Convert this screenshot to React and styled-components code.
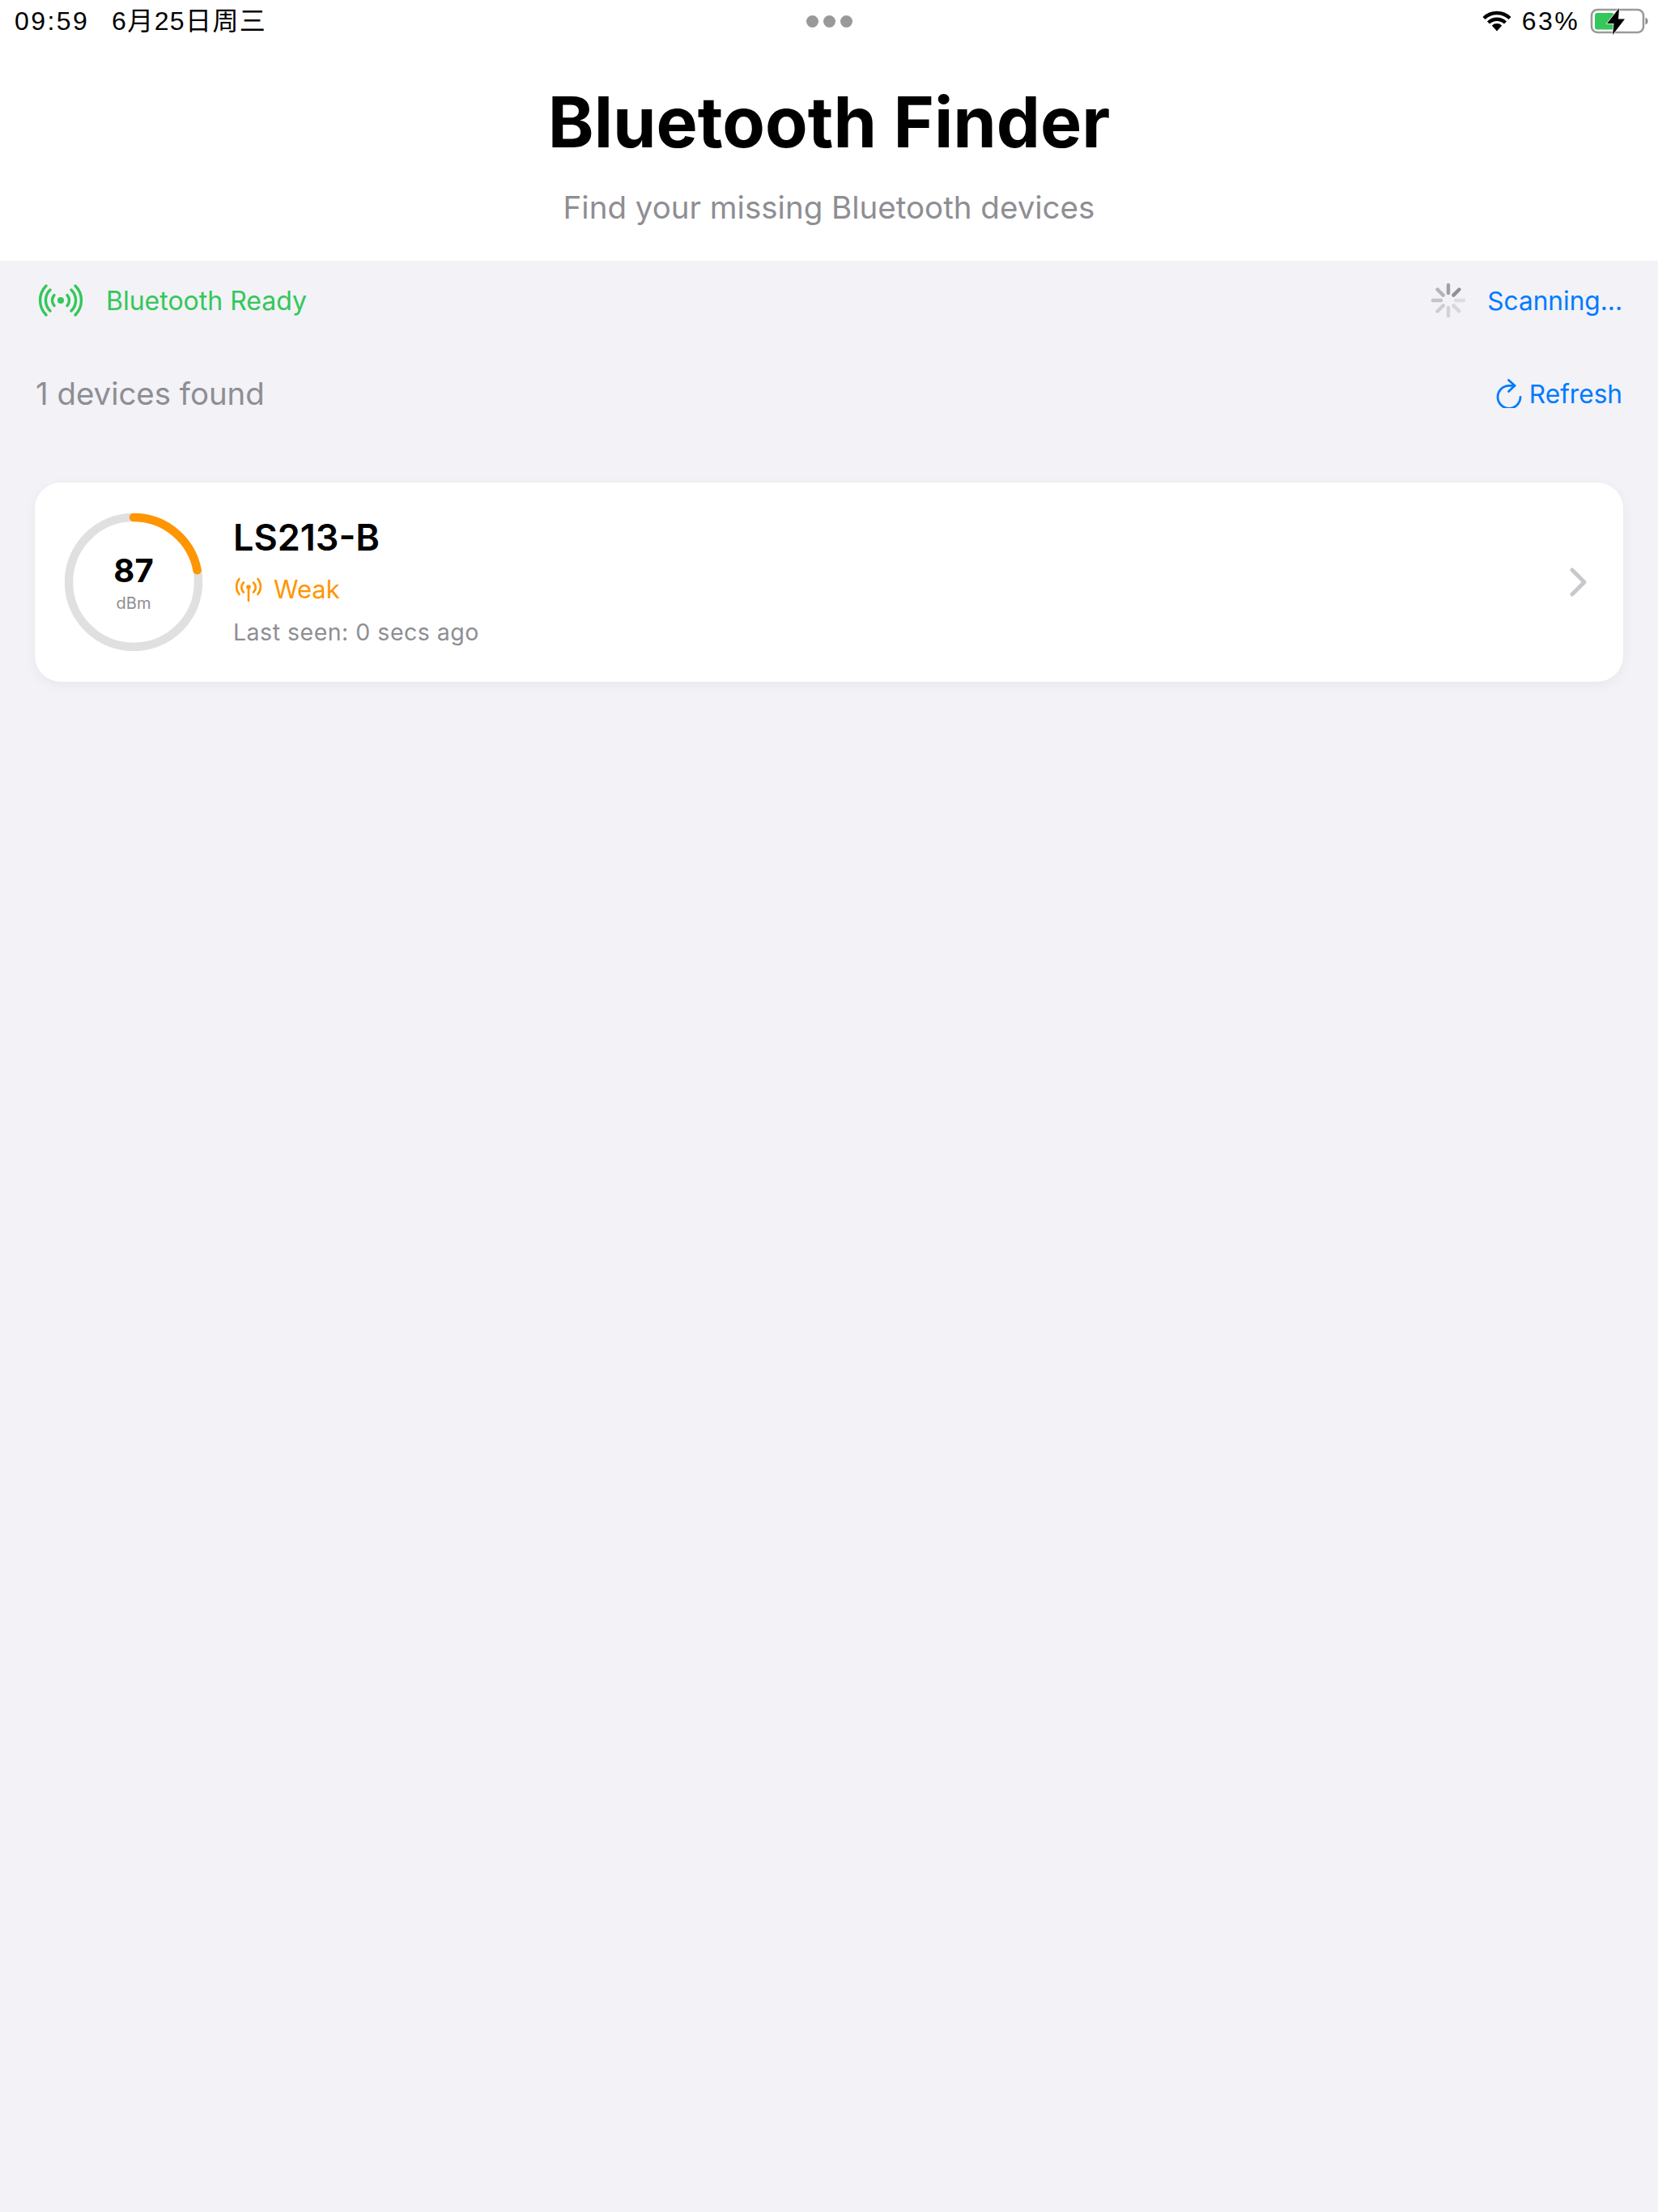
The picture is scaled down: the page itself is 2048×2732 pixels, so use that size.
import React from "react";
import styled, { createGlobalStyle } from "styled-components";

const blue = "#007AFF";
const green = "#34C759";
const orange = "#FF9500";
const gray = "#8E8E93";

const GlobalStyle = createGlobalStyle`
  html, body {
    margin: 0;
    padding: 0;
    background: #f2f2f7;
    font-family: Inter, "Noto Sans", sans-serif;
    -webkit-font-smoothing: antialiased;
  }
`;

export default function App() {
  return (
    <Page>
      <GlobalStyle />
      <Header>
        <StatusBar>
          <StatusLeft>
            <StatusText>09:59</StatusText>
            <StatusText $tight>6月25日周三</StatusText>
          </StatusLeft>
          <MoreDots>
            <i />
            <i />
            <i />
          </MoreDots>
          <StatusRight>
            <WifiIcon />
            <StatusText>63%</StatusText>
            <BatteryIcon />
          </StatusRight>
        </StatusBar>
        <Title>Bluetooth Finder</Title>
        <Subtitle>Find your missing Bluetooth devices</Subtitle>
      </Header>

      <Content>
        <InfoRow>
          <Status $color={green}>
            <BroadcastSvg width="56" height="42" viewBox="0 0 56 42" fill="none" stroke={green} strokeWidth="3.4" strokeLinecap="round">
              <circle cx="28" cy="21" r="4" fill={green} stroke="none" />
              <path d="M20 14.5 A9.7 9.7 0 0 0 20 27.5" />
              <path d="M36 14.5 A9.7 9.7 0 0 1 36 27.5" />
              <path d="M15 8 A18 18 0 0 0 15 34" />
              <path d="M41 8 A18 18 0 0 1 41 34" />
              <path d="M10 3 A25.5 25.5 0 0 0 10 39" />
              <path d="M46 3 A25.5 25.5 0 0 1 46 39" />
            </BroadcastSvg>
            Bluetooth Ready
          </Status>
          <Status $color={blue} $size="31.6px" $gap="26px">
            <Spinner />
            Scanning...
          </Status>
        </InfoRow>

        <CountRow>
          <Count>1 devices found</Count>
          <RefreshButton>
            <RefreshIcon />
            Refresh
          </RefreshButton>
        </CountRow>

        <DeviceCard>
          <Gauge>
            <GaugeRing />
            <GaugeValue>87</GaugeValue>
            <GaugeUnit>dBm</GaugeUnit>
          </Gauge>
          <DeviceInfo>
            <DeviceName>LS213-B</DeviceName>
            <Signal>
              <AntennaIcon />
              Weak
            </Signal>
            <LastSeen>Last seen: 0 secs ago</LastSeen>
          </DeviceInfo>
          <Chevron />
        </DeviceCard>
      </Content>
    </Page>
  );
}

function WifiIcon() {
  return (
    <svg width="36" height="26" viewBox="0 0 36 26">
      <path d="M18 25.5 L11.8 18.5 A9 9 0 0 1 24.2 18.5 Z" fill="#000" />
      <path d="M7.5 15 A15 15 0 0 1 28.5 15" fill="none" stroke="#000" strokeWidth="4.4" />
      <path d="M2 9.5 A23 23 0 0 1 34 9.5" fill="none" stroke="#000" strokeWidth="4.4" />
    </svg>
  );
}

function BatteryIcon() {
  return (
    <svg width="72" height="36" viewBox="0 0 72 36">
      <rect x="2" y="4" width="64" height="28" rx="7" fill="none" stroke="#9a9a9a" strokeWidth="2.6" />
      <rect x="6" y="8" width="24" height="20.5" rx="3" fill={green} />
      <path d="M68.5 13.5 C70.5 14.5 71.5 16 71.5 18 C71.5 20 70.5 21.5 68.5 22.5 Z" fill="#8a8a8a" />
      <path d="M36 2 L21 21 L29.5 21 L28 35 L43 15.5 L35 15.5 Z" fill="#000" stroke="#fff" strokeWidth="1.4" paintOrder="stroke" />
    </svg>
  );
}

const spokes = [0, 45, 90, 135, 180, 225, 270, 315];
const spokeOpacity = [0.62, 0.75, 0.16, 0.2, 0.24, 0.28, 0.34, 0.48];

function Spinner() {
  return (
    <svg width="44" height="44" viewBox="0 0 44 44">
      {spokes.map((deg, i) => (
        <line
          key={deg}
          x1="22"
          y1="3"
          x2="22"
          y2="13"
          stroke="#6f6f74"
          strokeWidth="4.4"
          strokeLinecap="round"
          opacity={spokeOpacity[i]}
          transform={`rotate(${deg} 22 22)`}
        />
      ))}
    </svg>
  );
}

function RefreshIcon() {
  return (
    <svg width="32" height="36" viewBox="0 0 32 36" fill="none" stroke={blue} strokeWidth="2.8" strokeLinecap="round" strokeLinejoin="round">
      <path d="M30 22.3 A14 14 0 1 1 16 8.3 L23 8.3" />
      <path d="M15.5 1.5 L23 8.3 L15.5 15.5" />
    </svg>
  );
}

function GaugeRing() {
  const r = 80;
  const circ = 2 * Math.PI * r;
  return (
    <RingSvg width="170" height="170" viewBox="0 0 170 170" fill="none" strokeWidth="10.5">
      <circle cx="85" cy="85" r={r} stroke="#E0E0E0" />
      <circle
        cx="85"
        cy="85"
        r={r}
        stroke={orange}
        strokeLinecap="round"
        strokeDasharray={`${circ * 0.22} ${circ}`}
        transform="rotate(-90 85 85)"
      />
    </RingSvg>
  );
}

function AntennaIcon() {
  return (
    <svg width="34" height="30" viewBox="0 0 34 30" fill="none" stroke={orange} strokeWidth="2.6" strokeLinecap="round">
      <circle cx="17" cy="12" r="2.8" fill={orange} stroke="none" />
      <path d="M17 13 L17 29" />
      <path d="M11 6.5 A8 8 0 0 0 11 18.5" />
      <path d="M23 6.5 A8 8 0 0 1 23 18.5" />
      <path d="M5.5 2 A15 15 0 0 0 5.5 21" />
      <path d="M28.5 2 A15 15 0 0 1 28.5 21" />
    </svg>
  );
}

function Chevron() {
  return (
    <ChevronSvg width="24" height="38" viewBox="0 0 24 38" fill="none" stroke="#C7C7CC" strokeWidth="5" strokeLinecap="round" strokeLinejoin="round">
      <path d="M4 4 L19 19 L4 34" />
    </ChevronSvg>
  );
}

const Page = styled.div`
  min-height: 2732px;
  background: #f2f2f7;
  display: flex;
  flex-direction: column;
`;

const Header = styled.header`
  height: 322px;
  background: #fff;
  display: flex;
  flex-direction: column;
  align-items: center;
`;

const StatusBar = styled.div`
  align-self: stretch;
  height: 52px;
  padding: 0 12px;
  display: grid;
  grid-template-columns: 1fr auto 1fr;
  align-items: center;
`;

const StatusLeft = styled.div`
  padding-left: 6px;
  display: flex;
  align-items: baseline;
  gap: 28px;
`;

const StatusRight = styled.div`
  display: flex;
  align-items: center;
  justify-content: flex-end;
  gap: 13px;
`;

const StatusText = styled.span`
  display: block;
  font-family: "Liberation Sans", "Noto Sans CJK SC", sans-serif;
  font-size: 32px;
  line-height: 36px;
  letter-spacing: ${(p) => (p.$tight ? "1.4px" : "2.4px")};
  color: #000;
`;

const MoreDots = styled.div`
  display: flex;
  gap: 6px;

  i {
    width: 15px;
    height: 15px;
    border-radius: 50%;
    background: #999;
  }
`;

const Title = styled.h1`
  margin: 46px 0 0;
  font-size: 86px;
  line-height: 106px;
  font-weight: 700;
  color: #000;
`;

const Subtitle = styled.p`
  margin: 28px 0 0;
  font-size: 38.5px;
  line-height: 48px;
  color: ${gray};
`;

const Content = styled.main`
  padding: 0 44px;
  display: flex;
  flex-direction: column;
`;

const InfoRow = styled.div`
  height: 98px;
  display: flex;
  align-items: center;
  justify-content: space-between;
`;

const Status = styled.div`
  display: flex;
  align-items: center;
  gap: ${(p) => p.$gap || "24px"};
  font-size: ${(p) => p.$size || "32px"};
  color: ${(p) => p.$color};
`;

const BroadcastSvg = styled.svg`
  margin-left: 3px;
  margin-right: 4px;
`;

const CountRow = styled.div`
  height: 132px;
  display: flex;
  align-items: center;
  justify-content: space-between;
`;

const Count = styled.div`
  font-size: 38.4px;
  color: ${gray};
`;

const RefreshButton = styled.div`
  display: flex;
  align-items: center;
  gap: 9px;
  font-size: 31.6px;
  color: ${blue};
`;

const DeviceCard = styled.section`
  height: 246px;
  margin: 44px -1px 0;
  padding: 0 43px 0 37px;
  background: #fff;
  border-radius: 32px;
  box-shadow: 0 4px 16px rgba(0, 0, 0, 0.05);
  display: flex;
  align-items: center;
`;

const Gauge = styled.div`
  position: relative;
  width: 170px;
  height: 170px;
  flex: none;
  display: flex;
  flex-direction: column;
  align-items: center;
  justify-content: center;
`;

const RingSvg = styled.svg`
  position: absolute;
  inset: 0;
`;

const GaugeValue = styled.div`
  font-size: 40px;
  line-height: 48px;
  font-weight: 700;
  color: #000;
`;

const GaugeUnit = styled.div`
  margin-top: 3px;
  font-size: 20px;
  line-height: 26px;
  color: ${gray};
`;

const DeviceInfo = styled.div`
  margin: 0 0 3px 38px;
  flex: 1;
  display: flex;
  flex-direction: column;
`;

const DeviceName = styled.div`
  font-size: 45px;
  line-height: 54px;
  font-weight: 600;
  color: #000;
`;

const Signal = styled.div`
  margin: 17px 0 0 2px;
  display: flex;
  align-items: center;
  gap: 14px;
  font-size: 31px;
  line-height: 40px;
  color: ${orange};
`;

const LastSeen = styled.div`
  margin-top: 16px;
  font-size: 28.5px;
  line-height: 34px;
  letter-spacing: 0.5px;
  color: ${gray};
`;

const ChevronSvg = styled.svg`
  flex: none;
`;
